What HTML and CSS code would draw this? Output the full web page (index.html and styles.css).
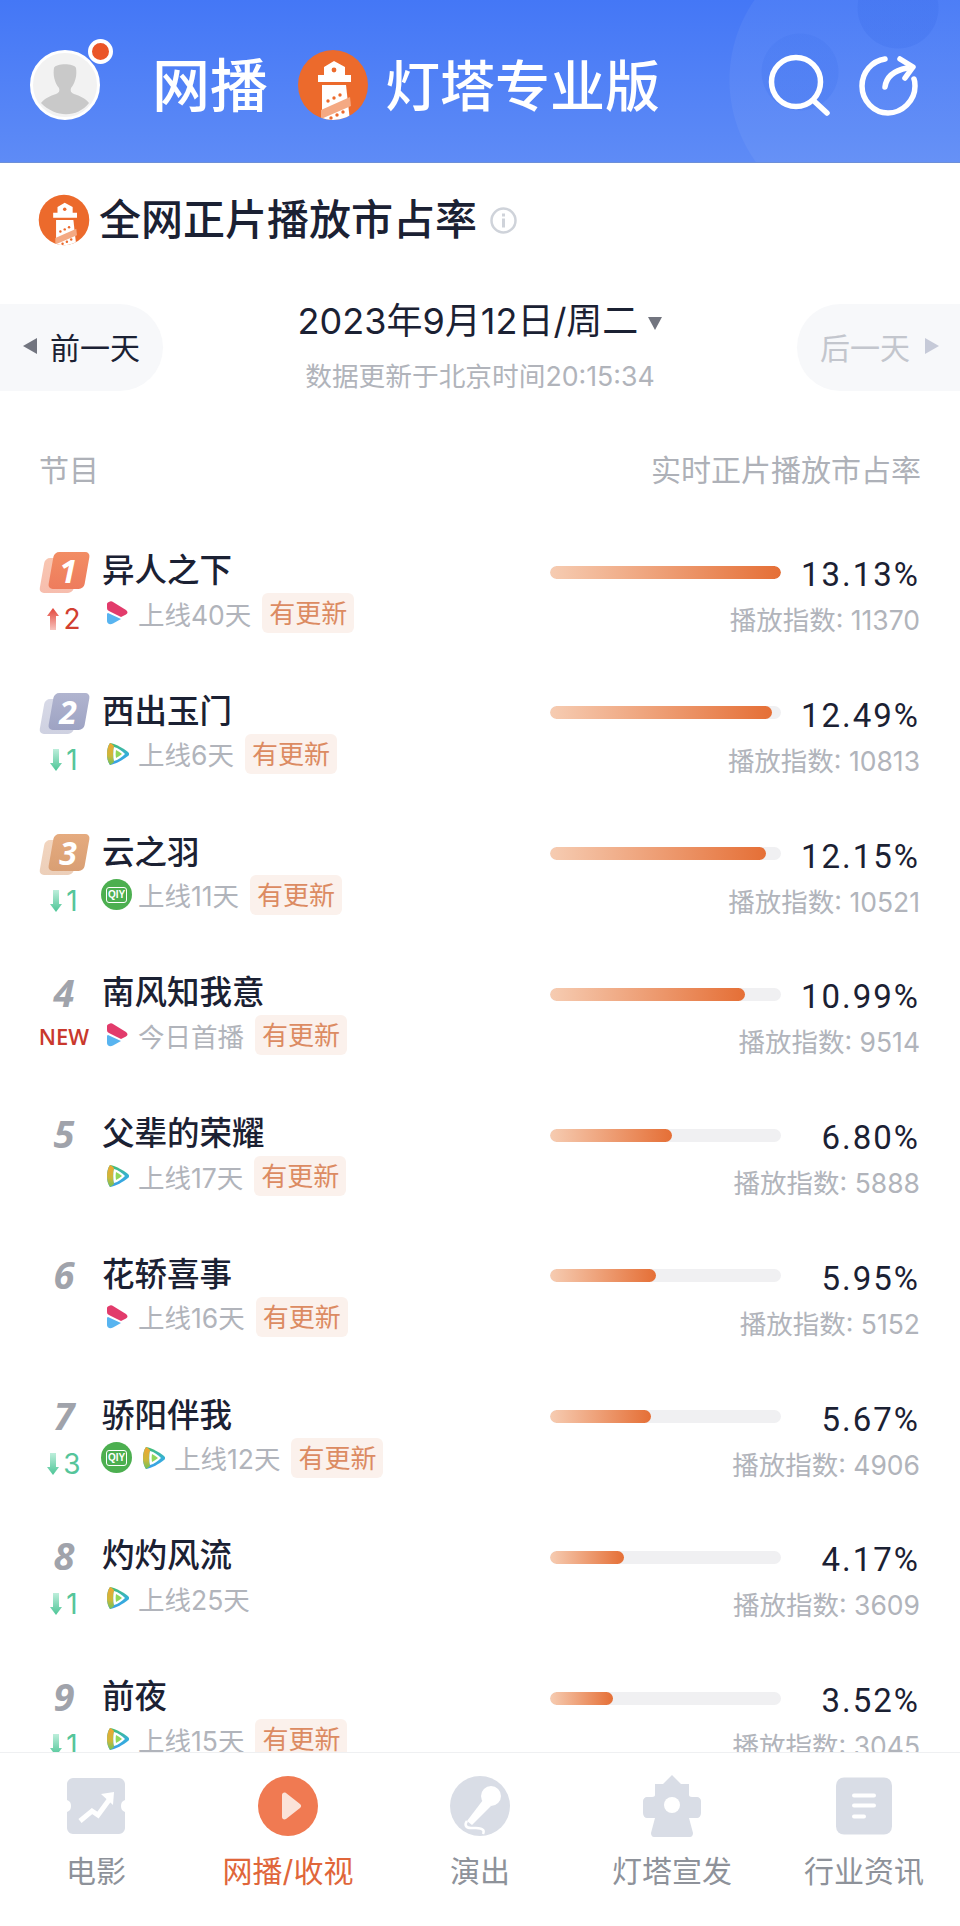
FILE: index.html
```html
<!DOCTYPE html>
<html lang="zh-CN">
<head>
  <meta charset="UTF-8" />
  <title>灯塔专业版</title>
  <link rel="stylesheet" href="styles.css">
</head>
<body>

  <svg class="defs" width="0" height="0">
    <defs>
      <clipPath id="logoClip"><circle cx="35" cy="36" r="35" /></clipPath>
      <symbol id="logo" viewBox="0 0 70 72">
        <circle cx="35" cy="36" r="35" fill="#ec6a2c" />
        <g clip-path="url(#logoClip)">
          <path d="M26 26v-8l10-6 11 6v8h6v7H20v-7z" fill="#fff" />
          <circle cx="36" cy="21" r="2.4" fill="#ec6a2c" />
          <path d="M24 36h24l4 36H24z" fill="#fff" />
          <path d="M23 61l29-13 1 9-30 13z" fill="#f4a983" />
          <g fill="#ec6a2c">
            <circle cx="30" cy="52" r="1.7" /><circle cx="36" cy="49" r="1.7" /><circle cx="42" cy="46" r="1.7" />
            <circle cx="33" cy="69" r="1.7" /><circle cx="39" cy="66" r="1.7" /><circle cx="45" cy="63" r="1.7" />
          </g>
        </g>
      </symbol>
      <symbol id="platMango" viewBox="0 0 22 24">
        <path d="M1 12l13 6-8 4.500c-3 1.500-6 .5-6-2.500v-6c0-1 0-2 1-2z" fill="#58b4f0" />
        <path d="M2 1c1-1 3-1 4 0l13 8c2 1.500 2 3.500 0 4.500L14 16 2 10c-2-1-2-2-2-4V3c0-1 1-2 2-2z" fill="#e23b6b" />
      </symbol>
      <symbol id="platTencent" viewBox="0 0 22 24">
        <path d="M3 1c6 1 13 5 18 9 1.500 1.300 1.500 2.700 0 4-5 4-12 8-18 9-2-3-3-6-3-11S1 4 3 1z" fill="url(#txOuter)" />
        <path d="M3 1C1 4 0 8 0 12s1 8 3 11c2-1 3-2 4-3-1-5-1-11 0-16-1-1-2-2-4-3z" fill="url(#txLeft)" />
        <path d="M7 5c4 1 8 4 11 7-3 3-7 6-11 7-1-4-1-10 0-14z" fill="#fff" />
        <path d="M9 8c2 1 4 2.500 6 4-2 1.500-4 3-6 4-.5-2.500-.5-5.500 0-8z" fill="#8fd75c" />
      </symbol>
      <symbol id="arrowUp" viewBox="0 0 12 22">
        <path d="M6 0l6 8H9v14H3V8H0z" fill="url(#upFade)" />
      </symbol>
      <symbol id="arrowDown" viewBox="0 0 12 22">
        <path d="M6 22l6-8H9V0H3v14H0z" fill="url(#downFade)" />
      </symbol>
      <linearGradient id="upFade" x1="0" y1="0" x2="0" y2="1">
        <stop offset="0" stop-color="#e2453a" /><stop offset="1" stop-color="#f8c4be" />
      </linearGradient>
      <linearGradient id="downFade" x1="0" y1="0" x2="0" y2="1">
        <stop offset="0" stop-color="#bdeedb" /><stop offset="1" stop-color="#4cc596" />
      </linearGradient>
      <linearGradient id="txOuter" x1="0" y1="0" x2="0" y2="1">
        <stop offset="0" stop-color="#45c06a" /><stop offset=".5" stop-color="#35b0d8" /><stop offset="1" stop-color="#3a9de8" />
      </linearGradient>
      <linearGradient id="txLeft" x1="0" y1="0" x2="0" y2="1">
        <stop offset="0" stop-color="#f2a531" /><stop offset=".6" stop-color="#c9b93c" /><stop offset="1" stop-color="#6cc15a" />
      </linearGradient>
    </defs>
  </svg>

  <div class="app">

    <header class="topbar">
      <div class="avatar">
        <svg viewBox="0 0 70 70" width="70" height="70">
          <circle cx="35" cy="35" r="33.500" fill="#f2f2f2" stroke="#fff" stroke-width="3" />
          <path d="M24 18c2-5 20-5 22 0 1 6 0 14-5 20-1 3 0 5 3 6 6 2 11 4 15 9-12 15-33 15-48 0 4-5 9-7 15-9 3-1 4-3 3-6-5-6-6-14-5-20z" fill="#c9c9c9" />
        </svg>
        <span class="avatar-dot"></span>
      </div>
      <span class="top-channel">网播</span>
      <svg class="top-logo" width="70" height="72"><use href="#logo" /></svg>
      <span class="top-brand">灯塔专业版</span>
      <div class="top-actions">
        <svg class="top-icon" viewBox="0 0 62 62" width="62" height="62" fill="none" stroke="#fff" stroke-width="5.500" stroke-linecap="round">
          <circle cx="28" cy="28" r="24.500" />
          <path d="M46 47l13 12" />
        </svg>
        <svg class="top-icon" viewBox="0 0 62 62" width="62" height="62" fill="none" stroke="#fff" stroke-width="5.500" stroke-linecap="round" stroke-linejoin="round">
          <path d="M27 5C14 7 4 18 4 32c0 15 12 27 26 27s27-12 27-27c0-3 0-5-1-7" />
          <path d="M27 33c1-8 7-16 22-19" />
          <path d="M42 5l13 8-8 11" />
        </svg>
      </div>
    </header>

    <main class="content">
      <div class="section-title">
        <svg width="52" height="52"><use href="#logo" /></svg>
        <h1>全网正片播放市占率</h1>
        <svg class="info-icon" viewBox="0 0 27 27" width="27" height="27" fill="none">
          <circle cx="13.500" cy="13.500" r="12" stroke="#cfd3da" stroke-width="2.500" />
          <rect x="12" y="11.500" width="3" height="9" fill="#cfd3da" />
          <rect x="12" y="6.500" width="3" height="3" fill="#cfd3da" />
        </svg>
      </div>

      <div class="date-row">
        <div class="day-btn prev"><i class="tri tri-left"></i>前一天</div>
        <div class="date-box">
          <div class="date-main">2023年9月12日/周二<i class="tri tri-down"></i></div>
          <div class="date-sub">数据更新于北京时间20:15:34</div>
        </div>
        <div class="day-btn next">后一天<i class="tri tri-right"></i></div>
      </div>

      <div class="list-head">
        <span>节目</span>
        <span>实时正片播放市占率</span>
      </div>

      <div id="list"></div>
    </main>

    <nav class="tabbar">
      <div class="tab">
        <svg viewBox="0 0 58 56" width="58" height="56">
          <path d="M6 0h46c3 0 6 3 6 6v16c-3 1-4 3-4 6s1 5 4 6v16c0 3-3 6-6 6H6c-3 0-6-3-6-6V34c3-1 4-3 4-6s-1-5-4-6V6c0-3 3-6 6-6z" fill="#d9dde6" />
          <path d="M13 43l12-10 6 4 11-15" fill="none" stroke="#fff" stroke-width="5" />
          <path d="M34 16l13-2-1 13z" fill="#fff" />
        </svg>
        <span>电影</span>
      </div>
      <div class="tab active">
        <svg viewBox="0 0 60 60" width="60" height="60">
          <circle cx="30" cy="30" r="30" fill="#f07a52" />
          <path d="M24 19c0-2 2-3 4-2l14 11c1.500 1 1.500 3 0 4L28 43c-2 1-4 0-4-2z" fill="#fbe3d8" />
        </svg>
        <span>网播/收视</span>
      </div>
      <div class="tab">
        <svg viewBox="0 0 60 60" width="60" height="60">
          <circle cx="30" cy="30" r="30" fill="#d9dde6" />
          <circle cx="41" cy="20" r="10" fill="#fff" />
          <path d="M33 24l8 6-19 19-5-4z" fill="#fff" />
          <path d="M17 45c-3 4-1 7 4 7 6 0 10-1 12 2 1 1 1 2 0 4" fill="none" stroke="#fff" stroke-width="2.500" />
        </svg>
        <span>演出</span>
      </div>
      <div class="tab">
        <svg viewBox="0 0 58 62" width="58" height="62">
          <path d="M29 0l9 9h8v11c0 1 1 2 3 2h5c2 0 4 2 4 4v12c0 3-2 5-4 5h-8l4 15c0 2-1 4-3 4H11c-2 0-3-2-3-4l4-15H4c-2 0-4-2-4-5V26c0-2 2-4 4-4h5c2 0 3-1 3-2V9h8z" fill="#d9dde6" />
          <circle cx="29" cy="30" r="8" fill="#fff" />
        </svg>
        <span>灯塔宣发</span>
      </div>
      <div class="tab">
        <svg viewBox="0 0 56 57" width="56" height="57">
          <rect width="56" height="57" rx="8" fill="#d9dde6" />
          <rect x="16" y="16" width="24" height="4" rx="2" fill="#fff" />
          <rect x="16" y="26" width="24" height="4" rx="2" fill="#fff" />
          <rect x="16" y="37" width="14" height="4" rx="2" fill="#fff" />
        </svg>
        <span>行业资讯</span>
      </div>
    </nav>
  </div>

  <script>
    const shows = [
      { name: '异人之下', trend: 'up', move: 2, plats: ['mango'], since: '上线40天', tag: true, bar: 100, pct: '13.13%', idx: 11370 },
      { name: '西出玉门', trend: 'down', move: 1, plats: ['tencent'], since: '上线6天', tag: true, bar: 96.300, pct: '12.49%', idx: 10813 },
      { name: '云之羽', trend: 'down', move: 1, plats: ['iqiyi'], since: '上线11天', tag: true, bar: 93.600, pct: '12.15%', idx: 10521 },
      { name: '南风知我意', trend: 'new', plats: ['mango'], since: '今日首播', tag: true, bar: 84.600, pct: '10.99%', idx: 9514 },
      { name: '父辈的荣耀', plats: ['tencent'], since: '上线17天', tag: true, bar: 52.700, pct: '6.80%', idx: 5888 },
      { name: '花轿喜事', plats: ['mango'], since: '上线16天', tag: true, bar: 45.700, pct: '5.95%', idx: 5152 },
      { name: '骄阳伴我', trend: 'down', move: 3, plats: ['iqiyi', 'tencent'], since: '上线12天', tag: true, bar: 43.600, pct: '5.67%', idx: 4906 },
      { name: '灼灼风流', trend: 'down', move: 1, plats: ['tencent'], since: '上线25天', tag: false, bar: 31.900, pct: '4.17%', idx: 3609 },
      { name: '前夜', trend: 'down', move: 1, plats: ['tencent'], since: '上线15天', tag: true, bar: 27.100, pct: '3.52%', idx: 3045 }
    ];

    function platIcon(p) {
      if (p === 'iqiyi') return '<span class="plat-iqiyi"><b>QIY</b></span>';
      const id = p === 'mango' ? 'platMango' : 'platTencent';
      return `<svg class="plat" width="22" height="24"><use href="#${id}" /></svg>`;
    }

    function trendHtml(s) {
      if (s.trend === 'new') return '<span class="trend-new">NEW</span>';
      if (!s.trend) return '';
      const id = s.trend === 'up' ? 'arrowUp' : 'arrowDown';
      return `<span class="trend ${s.trend}"><svg width="12" height="22"><use href="#${id}" /></svg>${s.move}</span>`;
    }

    const list = document.getElementById('list');
    list.innerHTML = shows.map((s, i) => {
      const rank = i < 3
        ? `<div class="medal medal${i + 1}"><span>${i + 1}</span></div>`
        : `<div class="rank-num">${i + 1}</div>`;
      return `<div class="row">
        <div class="rank">${rank}${trendHtml(s)}</div>
        <div class="info">
          <div class="name">${s.name}</div>
          <div class="meta">
            ${s.plats.map(platIcon).join('')}
            <span class="since">${s.since}</span>
            ${s.tag ? '<span class="tag">有更新</span>' : ''}
          </div>
        </div>
        <div class="stats">
          <div class="stats-top">
            <div class="track"><div class="fill" style="width: ${s.bar}%"></div></div>
            <div class="pct">${s.pct}</div>
          </div>
          <div class="idx">播放指数: ${s.idx}</div>
        </div>
      </div>`;
    }).join('');
  </script>
</body>
</html>
```

FILE: styles.css
```css
* { box-sizing: border-box; }
body {
  margin: 0;
  font-family: Inter, "Noto Sans CJK SC", sans-serif;
  background: #fff;
  color: #1b2133;
}
.defs { display: block; height: 0; }
.app {
  height: 100vh;
  display: flex;
  flex-direction: column;
  overflow: hidden;
}

/* top bar */
.topbar {
  height: 163px;
  flex: none;
  display: flex;
  align-items: center;
  padding: 8px 40px 0 30px;
  background:
    radial-gradient(circle at 898px 8px, rgba(60,110,235,.3) 0, rgba(60,110,235,.3) 40px, transparent 41px),
    radial-gradient(circle at 800px 72px, rgba(70,120,240,.35) 0, rgba(70,120,240,.35) 38px, transparent 39px),
    radial-gradient(circle at 870px 80px, rgba(255,255,255,.05) 0, rgba(255,255,255,.05) 140px, transparent 141px),
    linear-gradient(#4477f6, #5e8bf6);
  border-bottom: 1px solid #6d8fd8;
}
.avatar {
  position: relative;
  width: 70px;
  height: 70px;
  flex: none;
}
.avatar svg { display: block; }
.avatar-dot {
  position: absolute;
  top: -11px;
  left: 58px;
  width: 25px;
  height: 25px;
  border-radius: 50%;
  background: #ea5528;
  border: 4px solid #fff;
}
.top-channel {
  margin: 2px 0 0 52px;
  color: #fff;
  font-size: 58px;
  line-height: 70px;
  font-weight: 500;
}
.top-logo { margin-left: 30px; flex: none; }
.top-brand {
  margin: 2px 0 0 17px;
  color: #fff;
  font-size: 55px;
  line-height: 70px;
  font-weight: 500;
}
.top-actions {
  margin-left: auto;
  display: flex;
  gap: 28px;
}
.top-icon { display: block; }

/* heading + date */
.content {
  flex: 1;
  min-height: 0;
  overflow: hidden;
}
.section-title {
  display: flex;
  align-items: center;
  padding: 26px 0 0 38px;
  height: 88px;
}
.section-title h1 {
  margin: 0 0 0 9px;
  font-size: 42px;
  line-height: 52px;
  font-weight: 500;
}
.info-icon { margin-left: 13px; }

.date-row {
  display: flex;
  justify-content: space-between;
  margin-top: 53px;
  height: 87px;
}
.day-btn {
  width: 163px;
  display: flex;
  align-items: center;
  padding-bottom: 4px;
  font-size: 30px;
  background: #f7f8fa;
}
.prev {
  padding-left: 23px;
  gap: 13px;
  border-radius: 0 44px 44px 0;
}
.next {
  padding-left: 23px;
  gap: 15px;
  color: #c3c6cd;
  border-radius: 44px 0 0 44px;
}
.tri { display: block; width: 0; height: 0; }
.tri-left { border: 8px solid transparent; border-left: 0; border-right: 14px solid #72757f; }
.tri-right { border: 8px solid transparent; border-right: 0; border-left: 14px solid #c6cad8; }
.tri-down {
  margin-left: 10px;
  margin-top: 4px;
  border: 7px solid transparent;
  border-bottom: 0;
  border-top: 13px solid #72757f;
}
.date-box { text-align: center; margin-top: -3px; }
.date-main {
  display: flex;
  align-items: center;
  justify-content: center;
  font-size: 36px;
  line-height: 40px;
}
.date-sub {
  margin-top: 18px;
  font-size: 26.700px;
  line-height: 34px;
  color: #b1b4bb;
}

.list-head {
  display: flex;
  justify-content: space-between;
  margin-top: 59px;
  padding: 0 39px;
  font-size: 30px;
  line-height: 40px;
  color: #aeb1b8;
}

/* rows */
#list { margin-top: 41px; }
.row {
  height: 140.750px;
  display: flex;
  padding: 20px 40px 0 38px;
}
.rank {
  width: 64px;
  flex: none;
  display: flex;
  flex-direction: column;
  align-items: center;
  padding-right: 12px;
}
.medal {
  position: relative;
  width: 49px;
  height: 41px;
  margin-top: 1px;
  flex: none;
}
.medal::before, .medal::after {
  content: "";
  position: absolute;
  border-radius: 5px;
  transform: skewX(-10deg);
}
.medal::before { left: 2px; top: 6px; width: 34px; height: 35px; opacity: .5; }
.medal::after { left: 11px; top: 0; width: 36px; height: 37px; }
.medal span {
  position: relative;
  z-index: 1;
  display: block;
  padding-left: 8px;
  width: 49px;
  text-align: center;
  color: #fff;
  font: italic 700 32px/38px "Open Sans", sans-serif;
}
.medal1::before, .medal1::after { background: linear-gradient(#f28d64, #ee7c5d); }
.medal2::before, .medal2::after { background: linear-gradient(#b0b4cf, #9ea3c3); }
.medal3::before, .medal3::after { background: linear-gradient(#e5ab7f, #d99f74); }

.rank-num {
  height: 44px;
  margin: -3px 0 1px;
  color: #a0a3ab;
  font: italic 700 38px/44px "Open Sans", sans-serif;
}
.trend {
  display: flex;
  align-items: center;
  gap: 4px;
  margin-top: 10px;
  font-size: 28px;
  line-height: 32px;
}
.trend.up { color: #d23f30; }
.trend.down { color: #55c59a; }
.trend-new {
  margin-top: 6px;
  color: #c9382c;
  font: 600 22px/30px "Open Sans", sans-serif;
}

.info { flex: 1; min-width: 0; }
.name {
  font-size: 32.500px;
  line-height: 40px;
  font-weight: 500;
  color: #1b2133;
}
.meta {
  display: flex;
  align-items: center;
  margin-top: 2px;
  height: 40px;
}
.plat { margin: 0 9px 0 5px; flex: none; }
.plat-iqiyi {
  width: 31px;
  height: 31px;
  margin: 0 6px 0 -1px;
  flex: none;
  display: flex;
  align-items: center;
  justify-content: center;
  border-radius: 50%;
  background: #4caf50;
}
.plat-iqiyi b {
  border: 1px solid #fff;
  border-radius: 3px;
  padding: 0 1px;
  color: #fff;
  font: 700 10px/14px "Liberation Sans", sans-serif;
}
.since {
  font-size: 26.500px;
  color: #b1b4bb;
  white-space: nowrap;
}
.tag {
  margin-left: 11px;
  padding: 0 7px;
  height: 40px;
  line-height: 42px;
  font-size: 26px;
  color: #dc8b62;
  background: #fbf1ec;
  border-radius: 6px;
  white-space: nowrap;
}

.stats { width: 370px; flex: none; padding-top: 1px; }
.stats-top {
  display: flex;
  justify-content: space-between;
  align-items: center;
  height: 40px;
}
.track {
  width: 231px;
  height: 13px;
  border-radius: 7px;
  background: #f0f0f2;
  overflow: hidden;
}
.fill {
  height: 100%;
  border-radius: 7px;
  background: linear-gradient(90deg, #f6ccb2, #e56f36);
}
.pct {
  margin-top: 6px;
  font: 400 33px/40px Roboto, sans-serif;
  letter-spacing: 2px;
  color: #1b2133;
}
.idx {
  margin-top: 10px;
  text-align: right;
  font-size: 26.500px;
  line-height: 36px;
  color: #b1b4bb;
}

/* bottom tabs */
.tabbar {
  height: 174px;
  flex: none;
  display: grid;
  grid-template-columns: repeat(5, 1fr);
  background: #fff;
  border-top: 1px solid #eff0f2;
}
.tab {
  display: flex;
  flex-direction: column;
  align-items: center;
  padding-top: 22px;
  font-size: 30px;
  color: #8e929a;
}
.tab svg { display: block; height: 62px; }
.tab span {
  margin-top: 12px;
  line-height: 44px;
}
.tab.active { color: #e0663a; }
```
